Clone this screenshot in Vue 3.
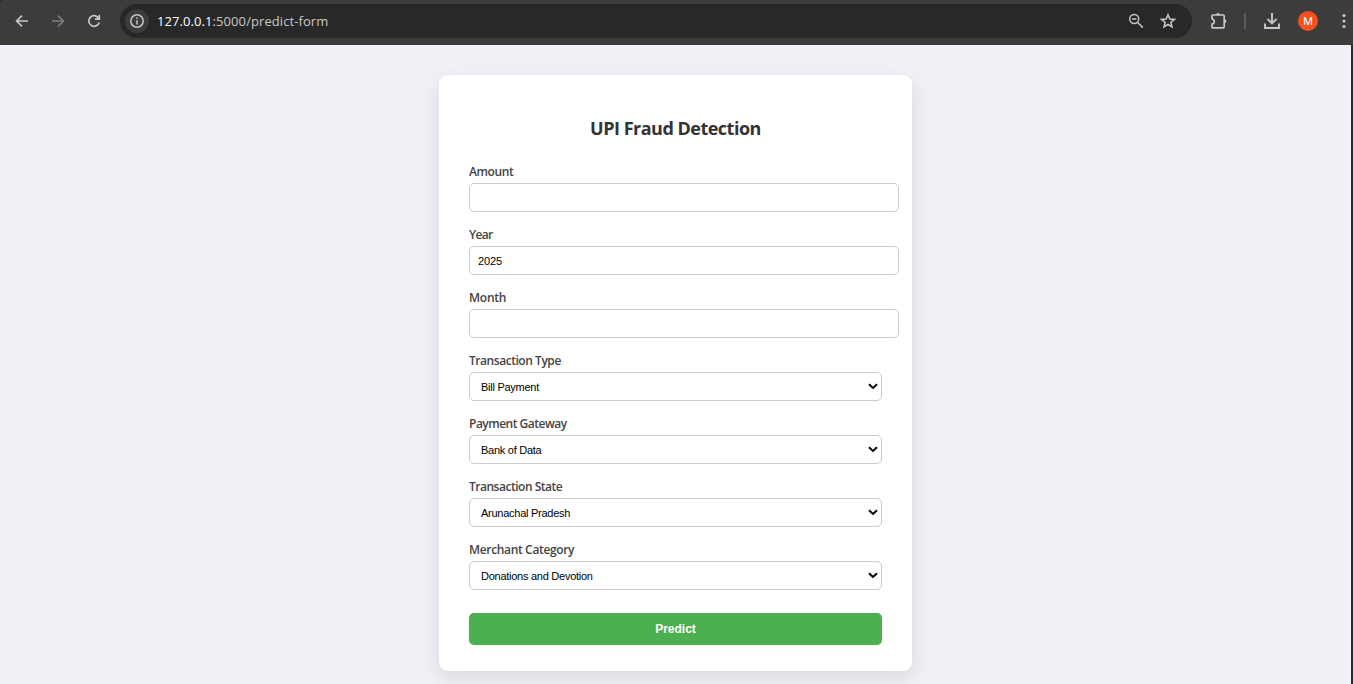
<script setup>
import { reactive } from 'vue'

const inputs = reactive([
  { id: 'amount', label: 'Amount', value: '', spacing: '-0.4px' },
  { id: 'year', label: 'Year', value: '2025', spacing: '-0.65px' },
  { id: 'month', label: 'Month', value: '', spacing: '-0.25px' },
])

const selects = [
  { id: 'type', label: 'Transaction Type', value: 'Bill Payment', spacing: '-0.45px' },
  { id: 'gateway', label: 'Payment Gateway', value: 'Bank of Data', spacing: '-0.5px' },
  { id: 'state', label: 'Transaction State', value: 'Arunachal Pradesh', spacing: '-0.48px' },
  { id: 'category', label: 'Merchant Category', value: 'Donations and Devotion', spacing: '-0.34px' },
]
</script>

<template>
  <div class="window">
    <header class="toolbar">
      <svg class="icon back" width="16" height="16" viewBox="0 0 16 16">
        <path d="M14 8H3M8 2.6L2.6 8L8 13.4" />
      </svg>
      <svg class="icon forward" width="16" height="16" viewBox="0 0 16 16">
        <path d="M2 8H13M8 2.6L13.4 8L8 13.4" />
      </svg>
      <svg class="icon reload" width="16" height="16" viewBox="0 0 16 16">
        <path d="M12.6 5.2A5.3 5.3 0 1 0 13.2 9.4M13.3 2V6.2H9" />
      </svg>
      <div class="address">
        <span class="info">
          <svg class="icon" width="16" height="16" viewBox="0 0 16 16">
            <circle cx="8" cy="8" r="6.2" />
            <path d="M8 7.2V11.4M8 4.4V6" />
          </svg>
        </span>
        <span class="url"><b>127.0.0.1</b>:5000/predict-form</span>
        <svg class="icon lens" width="16" height="16" viewBox="0 0 16 16">
          <circle cx="6.2" cy="6" r="4.5" />
          <path d="M9.5 9.3L14.8 14.6M4 6H8.4" />
        </svg>
        <svg class="icon star" width="16" height="16" viewBox="0 0 16 16">
          <path d="M8 1.8L9.8 6L14.5 6.4L10.9 9.4L12 14L8 11.5L4 14L5.1 9.4L1.5 6.4L6.2 6Z" />
        </svg>
      </div>
      <svg class="icon puzzle" width="18" height="18" viewBox="0 0 18 18">
        <path d="M3 3H13.2Q14.2 3 14.2 4V14.8Q14.2 15.8 13.2 15.8H3Q2 15.8 2 14.8V12C5 11.4 5 7.4 2 6.8V4Q2 3 3 3Z" />
        <path class="solid" d="M6.2 3A1.9 1.9 0 0 1 10 3ZM14.4 7.3A1.9 1.9 0 0 1 14.4 11.1Z" />
      </svg>
      <span class="divider"></span>
      <svg class="icon download" width="18" height="18" viewBox="0 0 18 18">
        <path d="M9 1V11M4.4 6.8L9 11.4L13.6 6.8M2 11.6V16H16V11.6" />
      </svg>
      <span class="avatar">M</span>
      <svg class="dots" width="4" height="16" viewBox="0 0 4 16">
        <circle cx="2" cy="2.5" r="1.6" />
        <circle cx="2" cy="8" r="1.6" />
        <circle cx="2" cy="13.5" r="1.6" />
      </svg>
    </header>

    <main class="page">
      <form class="card" @submit.prevent>
        <h2>UPI Fraud Detection</h2>
        <div v-for="f in inputs" :key="f.id" class="field">
          <label :for="f.id" :style="{ letterSpacing: f.spacing }">{{ f.label }}</label>
          <input :id="f.id" v-model="f.value" class="control" type="text" />
        </div>
        <div v-for="f in selects" :key="f.id" class="field">
          <label :for="f.id" :style="{ letterSpacing: f.spacing }">{{ f.label }}</label>
          <div class="select">
            <select :id="f.id" class="control">
              <option>{{ f.value }}</option>
            </select>
            <svg class="chevron" width="10" height="7" viewBox="0 0 10 7">
              <path d="M1 1.2L5 4.9L9 1.2" />
            </svg>
          </div>
        </div>
        <button type="submit">Predict</button>
      </form>
    </main>
  </div>
</template>

<style>
body {
  margin: 0;
  overflow: hidden;
}
</style>

<style scoped>
.window {
  width: 1353px;
  height: 684px;
  overflow: hidden;
  background: #2b2b2b;
  font-family: "Open Sans", "Noto Sans", sans-serif;
}
.toolbar {
  box-sizing: border-box;
  height: 45px;
  padding: 4px 0 7px 14px;
  display: flex;
  align-items: center;
  background: #3c3c3c;
  border-top-left-radius: 4px;
}
.icon {
  display: block;
  flex: none;
  fill: none;
  stroke: #c7c7c7;
  stroke-width: 1.7;
}
.forward {
  margin-left: 20px;
  stroke: #7c7c7c;
}
.reload {
  margin-left: 20px;
}
.address {
  box-sizing: border-box;
  width: 1072px;
  height: 34px;
  margin-left: 18px;
  padding: 0 16px 0 5px;
  display: flex;
  align-items: center;
  border-radius: 17px;
  background: #282828;
}
.info {
  width: 24px;
  height: 24px;
  display: flex;
  align-items: center;
  justify-content: center;
  border-radius: 50%;
  background: #3c3c3c;
}
.info .icon {
  stroke-width: 1.5;
}
.url {
  flex: 1;
  margin-left: 8px;
  font-size: 13px;
  line-height: 20px;
  letter-spacing: 0.08px;
  color: #c7c7c7;
}
.url b {
  font-weight: 400;
  color: #fff;
}
.lens {
  stroke-width: 1.5;
}
.star {
  margin-left: 16px;
  stroke-width: 1.5;
}
.puzzle {
  margin-left: 18px;
}
.puzzle .solid {
  fill: #c7c7c7;
  stroke: none;
}
.divider {
  width: 2px;
  height: 16px;
  margin-left: 16px;
  background: #5c5c5c;
}
.download {
  margin-left: 17px;
  stroke-width: 1.9;
}
.avatar {
  width: 20px;
  height: 20px;
  margin-left: 17px;
  border-radius: 50%;
  background: #f4511e;
  color: #fff;
  font: 11px/21px Roboto, sans-serif;
  text-align: center;
}
.dots {
  margin-left: 24px;
  fill: #c7c7c7;
}
.page {
  box-sizing: border-box;
  width: 1351px;
  height: 639px;
  padding-top: 30px;
  overflow: hidden;
  background: #f0f1f6;
}
.card {
  box-sizing: border-box;
  width: 473px;
  height: 596px;
  margin: 0 auto;
  padding: 40px 30px 26px;
  border-radius: 9px;
  background: #fff;
  box-shadow: 0 7px 19px rgba(0, 0, 0, 0.1);
}
h2 {
  margin: 0 0 22px;
  font-size: 18px;
  line-height: 26px;
  font-weight: 700;
  text-align: center;
  white-space: nowrap;
  letter-spacing: -0.5px;
  color: #333;
}
.field {
  height: 63px;
}
label {
  display: block;
  height: 20px;
  font-size: 12px;
  line-height: 18px;
  font-weight: 600;
  color: #444;
}
.control {
  display: block;
  box-sizing: border-box;
  width: 430px;
  height: 29px;
  margin: 0;
  padding: 1px 8px 0;
  border: 1px solid #ccc;
  border-radius: 5px;
  outline: none;
  background: #fff;
  color: #000;
  font: 11px "Liberation Sans", Arial, sans-serif;
  letter-spacing: -0.15px;
}
.select {
  position: relative;
}
select.control {
  width: 413px;
  padding: 1px 11px 0;
  letter-spacing: -0.26px;
  appearance: none;
}
.chevron {
  position: absolute;
  top: 11px;
  right: 4px;
  fill: none;
  stroke: #000;
  stroke-width: 2;
}
button {
  display: block;
  width: 413px;
  height: 32px;
  margin: 9px 0 0;
  padding: 0;
  border: 0;
  border-radius: 5px;
  background: #4caf50;
  color: #fff;
  font: bold 12px "Liberation Sans", Arial, sans-serif;
}
</style>
